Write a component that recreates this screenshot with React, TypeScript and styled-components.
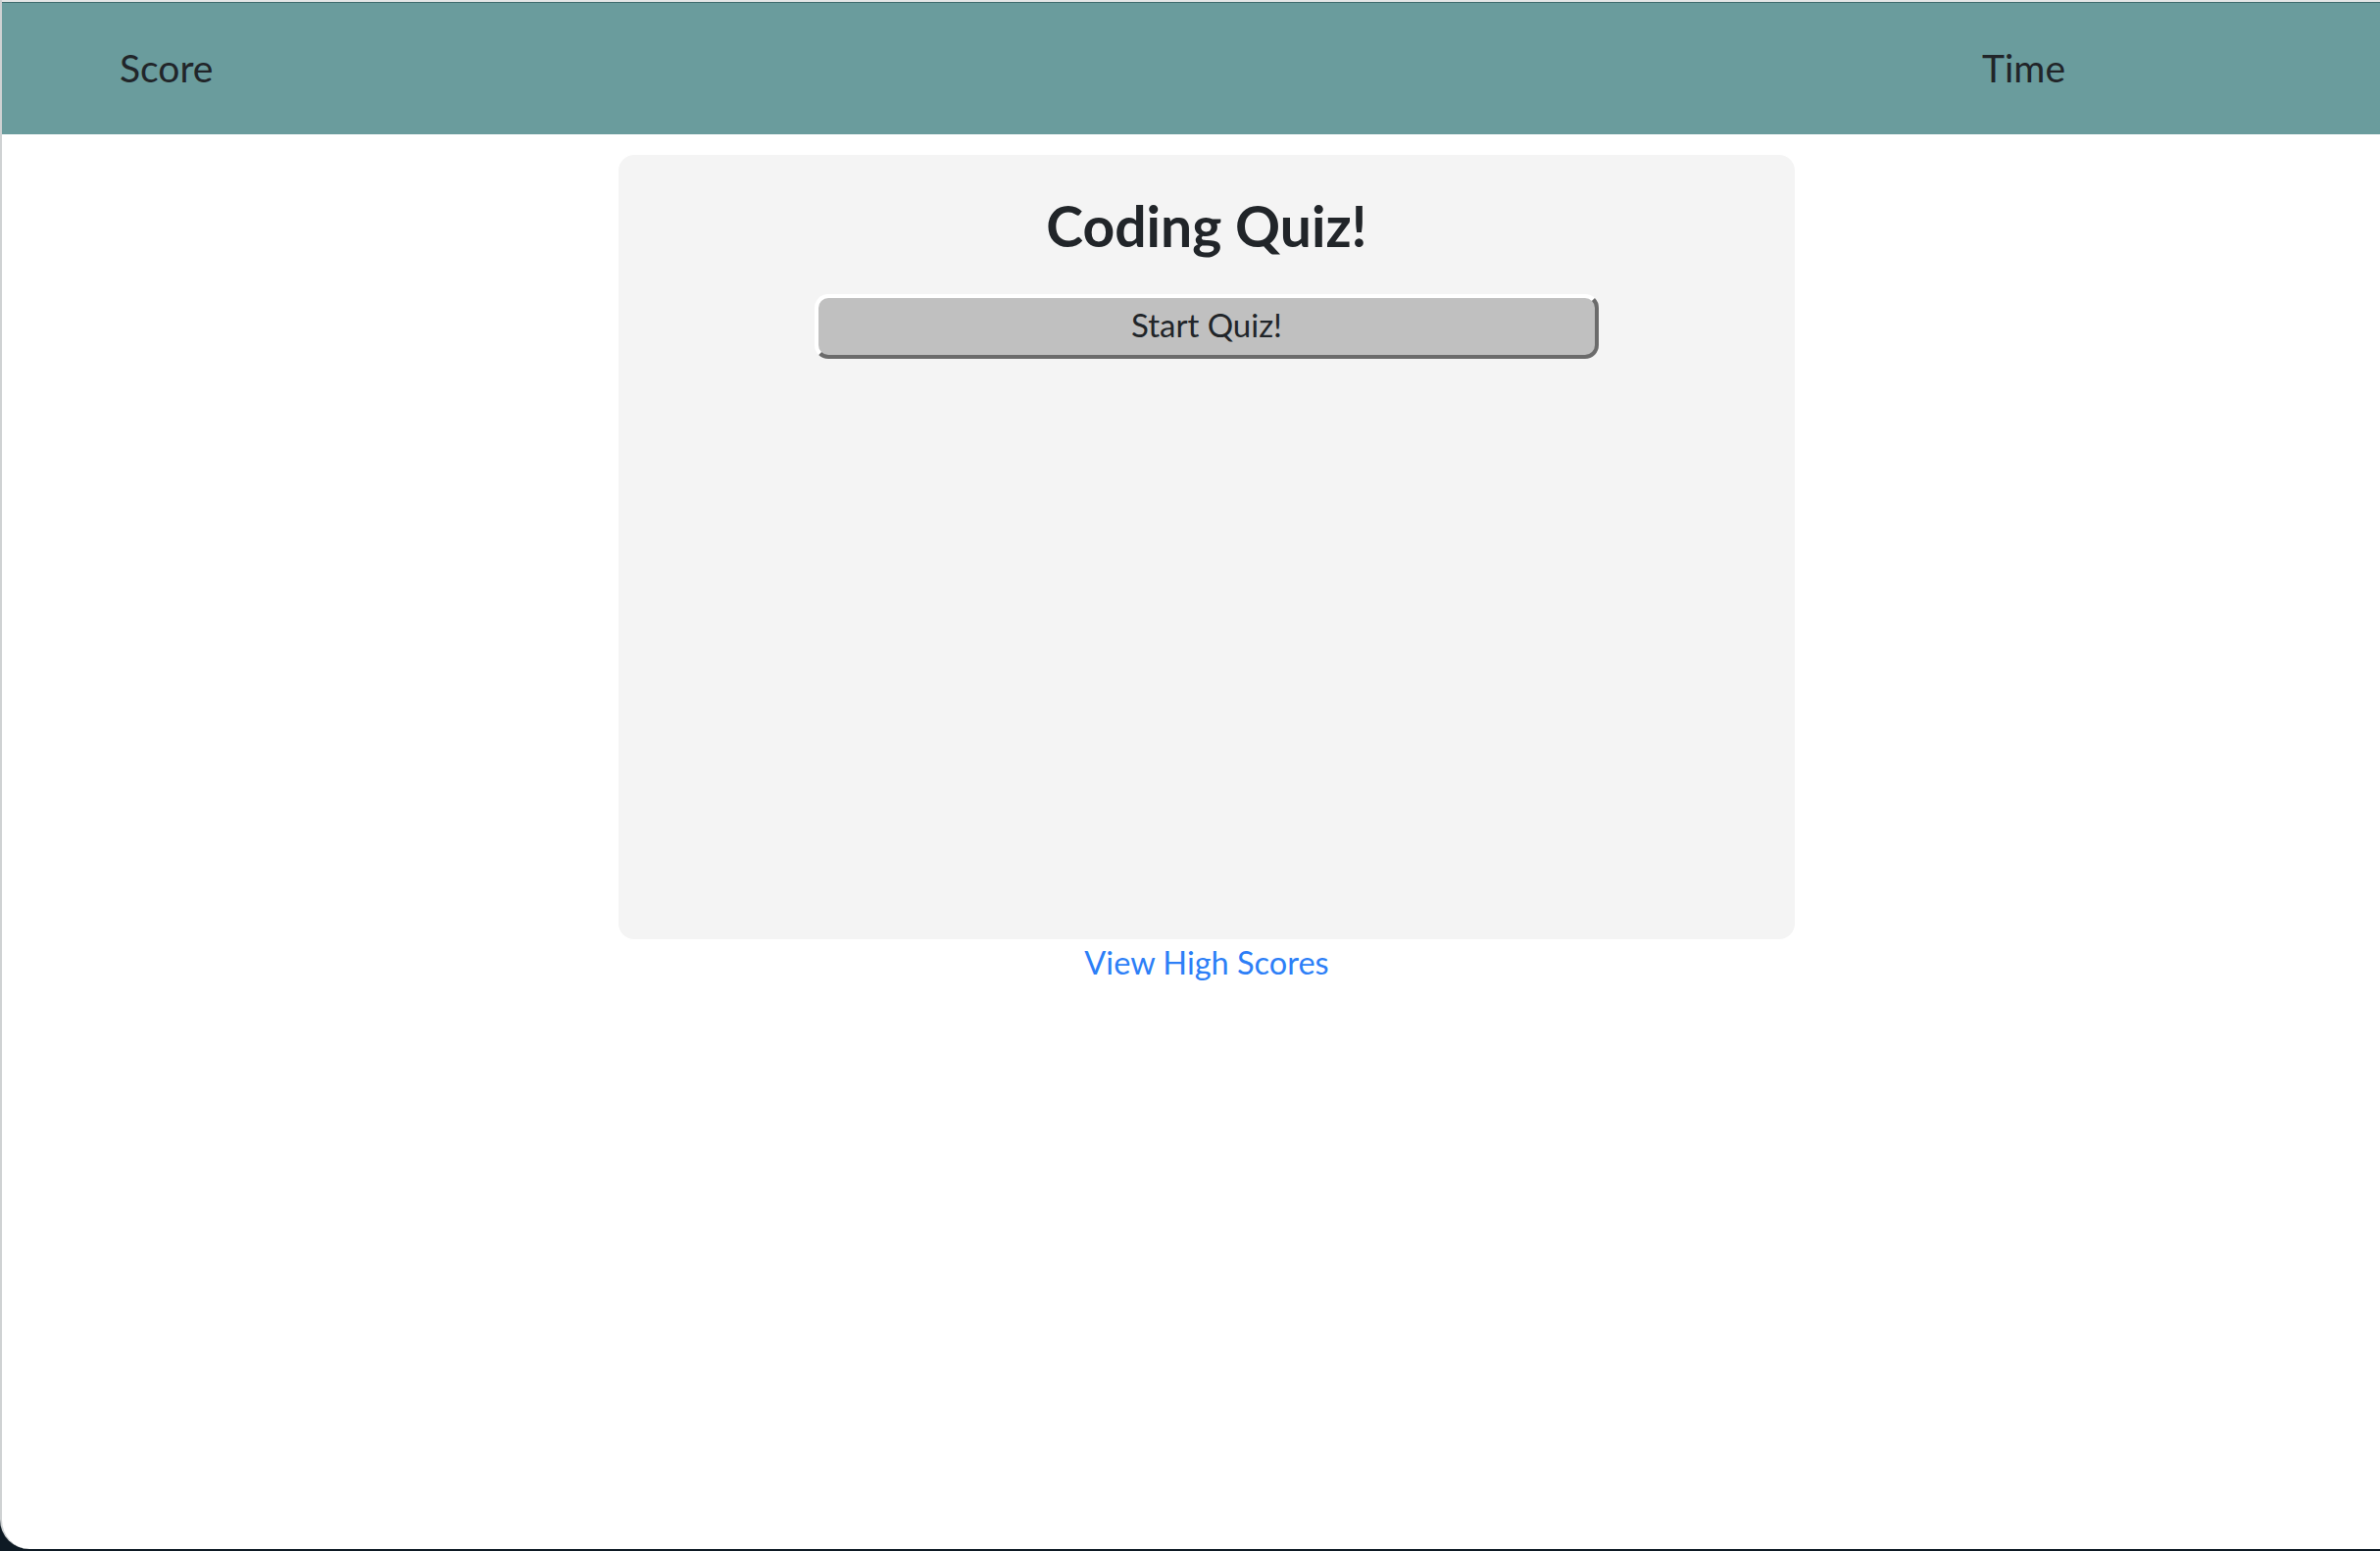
import React from "react";
import styled, { createGlobalStyle } from "styled-components";

const GlobalStyle = createGlobalStyle`
  html, body {
    margin: 0;
    padding: 0;
    background: #0e1a24;
  }
  body {
    font-family: Lato, "Open Sans", "Liberation Sans", sans-serif;
    color: #212529;
  }
  * { box-sizing: border-box; }
`;

const Window = styled.div`
  height: 1580px;
  background: #ffffff;
  border-left: 2px solid #cfd2d3;
  border-bottom-left-radius: 30px;
  overflow: hidden;
  display: flex;
  flex-direction: column;
`;

const TopStrip = styled.div`
  height: 2px;
  background: #e4e6e6;
`;

const Header = styled.header`
  height: 135px;
  background: #6a9c9d;
  border-top: 1px solid #3f6c6e;
  display: flex;
  align-items: center;
  justify-content: space-between;
  padding: 0 321px 1px 120px;
`;

const HeaderLabel = styled.span`
  font-size: 39px;
  font-weight: 400;
  line-height: 1.2;
  color: #212529;
`;

const Main = styled.main`
  display: flex;
  flex-direction: column;
  align-items: center;
  padding: 21px 0 0 32px;
`;

const Card = styled.section`
  width: 1200px;
  height: 800px;
  background: #f4f4f4;
  border-radius: 16px;
  display: flex;
  flex-direction: column;
  align-items: center;
  padding-top: 38px;
`;

const Title = styled.h1`
  margin: 0;
  font-size: 57px;
  font-weight: 700;
  line-height: 1.2;
  color: #212529;
`;

const StartButton = styled.button`
  margin-top: 36px;
  width: 800px;
  height: 66px;
  padding: 8px 0 11px;
  background: #c0c0c0;
  border-style: solid;
  border-width: 4px;
  border-color: #ffffff #6b6b6b #6b6b6b #ffffff;
  border-radius: 14px;
  font-family: Lato, "Open Sans", "Liberation Sans", sans-serif;
  font-size: 33px;
  line-height: 1.2;
  color: #212529;
  cursor: pointer;
`;

const ScoresLink = styled.a`
  margin-top: 4px;
  font-size: 32.5px;
  line-height: 1.2;
  color: #2d7ff7;
  text-decoration: none;
`;

export default function App() {
  return (
    <>
      <GlobalStyle />
      <Window>
        <TopStrip />
        <Header>
          <HeaderLabel>Score</HeaderLabel>
          <HeaderLabel>Time</HeaderLabel>
        </Header>
        <Main>
          <Card>
            <Title>Coding Quiz!</Title>
            <StartButton>Start Quiz!</StartButton>
          </Card>
          <ScoresLink href="#">View High Scores</ScoresLink>
        </Main>
      </Window>
    </>
  );
}
